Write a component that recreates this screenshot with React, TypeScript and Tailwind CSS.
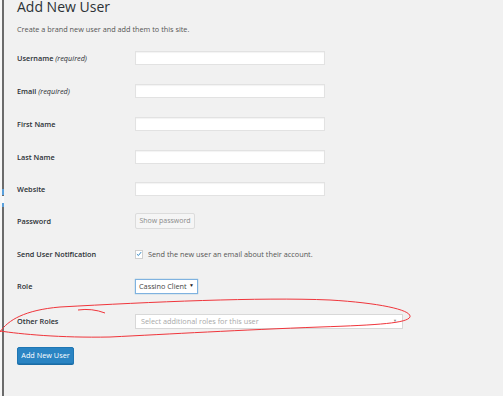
import React from "react";

const rows = [
  { label: "Username", req: true, kind: "text", mt: "mt-[16px]" },
  { label: "Email", req: true, kind: "text", mt: "mt-[17px]" },
  { label: "First Name", req: false, kind: "text", mt: "mt-[17px]" },
  { label: "Last Name", req: false, kind: "text", mt: "mt-[17px]" },
  { label: "Website", req: false, kind: "text", mt: "mt-[16px]" },
  { label: "Password", req: false, kind: "password", mt: "mt-[16px]" },
  { label: "Send User Notification", req: false, kind: "notify", mt: "mt-[17px]" },
  { label: "Role", req: false, kind: "role", mt: "mt-[16px]" },
  { label: "Other Roles", req: false, kind: "other", mt: "mt-[19px]" },
];

function Field({ kind }: { kind: string }) {
  if (kind === "text") {
    return (
      <div className="h-[14px] w-[190px] border border-[#e2e2e2] bg-white shadow-[inset_0_1px_1px_rgba(0,0,0,0.05)]" />
    );
  }
  if (kind === "password") {
    return (
      <div className="flex h-[16px] w-[60px] items-center justify-center rounded-[2px] border border-[#dcdcdc] bg-[#f5f5f5] text-[7px] text-[#8a8a8a]">
        Show password
      </div>
    );
  }
  if (kind === "notify") {
    return (
      <div className="flex items-center gap-[5px]">
        <div className="flex h-[9px] w-[8px] items-center justify-center border border-[#cfcfcf] bg-white">
          <svg viewBox="0 0 10 10" className="h-[8px] w-[8px]">
            <path d="M1.5 5.2 L4 7.6 L8.6 1.8" fill="none" stroke="#2e86c5" strokeWidth="1.6" />
          </svg>
        </div>
        <span className="text-[7.3px] text-[#555]">Send the new user an email about their account.</span>
      </div>
    );
  }
  if (kind === "role") {
    return (
      <div className="flex h-[15px] w-[63px] items-center justify-between border border-[#7fb2e0] bg-white px-[3px] text-[7.3px] text-[#444] shadow-[0_0_1px_rgba(30,140,190,0.6)]">
        <span>Cassino Client</span>
        <span className="text-[5px] text-[#222]">▼</span>
      </div>
    );
  }
  return (
    <div className="flex h-[15px] w-[268px] items-center justify-between border border-[#d8d8d8] bg-white px-[5px] text-[7.3px] text-[#a8a8a8]">
      <span>Select additional roles for this user</span>
      <span className="text-[4px] text-[#888]">▼</span>
    </div>
  );
}

export default function App() {
  return (
    <div
      className="relative flex h-[396px] w-[503px] overflow-hidden bg-[#f1f1f1]"
      style={{ fontFamily: '"Open Sans", "Noto Sans", sans-serif' }}
    >
      <div className="w-[2px] bg-[#f7f7f7]" />
      <div className="relative w-[2px] bg-[#6b6b6b]">
        <div className="absolute left-0 top-[189px] h-[6px] w-[2px] bg-[#5aa0dc]" />
        <div className="absolute left-0 top-[196px] h-[7px] w-[2px] bg-[#fafafa]" />
        <div className="absolute left-0 top-[203px] h-[4px] w-[2px] bg-[#5aa0dc]" />
      </div>

      <div className="flex flex-1 flex-col pl-[13px]">
        <h1 className="text-[14px] leading-[14px] text-[#2c3136]">Add New User</h1>
        <p className="mt-[10px] text-[7.3px] leading-[10px] text-[#555]">
          Create a brand new user and add them to this site.
        </p>

        <div className="flex flex-col">
          {rows.map((r, i) => (
            <div key={i} className={`flex h-[16px] items-center ${r.mt}`}>
              <div className="w-[118px] text-[7.3px] font-semibold text-[#2b3035]">
                {r.label}
                {r.req && <span className="font-normal italic"> (required)</span>}
              </div>
              <Field kind={r.kind} />
            </div>
          ))}
        </div>

        <div className="mt-[18px]">
          <div className="flex h-[17px] w-[57px] items-center justify-center rounded-[2px] border border-[#1f76b3] bg-[#2a84c3] text-[7.3px] text-white shadow-[0_1px_0_#1b6ca5]">
            Add New User
          </div>
        </div>
      </div>

      <svg className="pointer-events-none absolute left-0 top-0" width="503" height="396" viewBox="0 0 503 396">
        <path d="M78 310 Q92 308 105 313" fill="none" stroke="#f0353b" strokeWidth="1" />
        <path
          d="M0 332 C8 320 25 310 60 307 C150 302 260 297 330 300 C380 303 412 310 410 317 C407 323 380 325 320 327 C240 330 170 334 110 337 C60 338 20 334 0 331"
          fill="none"
          stroke="#f0353b"
          strokeWidth="1"
        />
      </svg>
    </div>
  );
}
